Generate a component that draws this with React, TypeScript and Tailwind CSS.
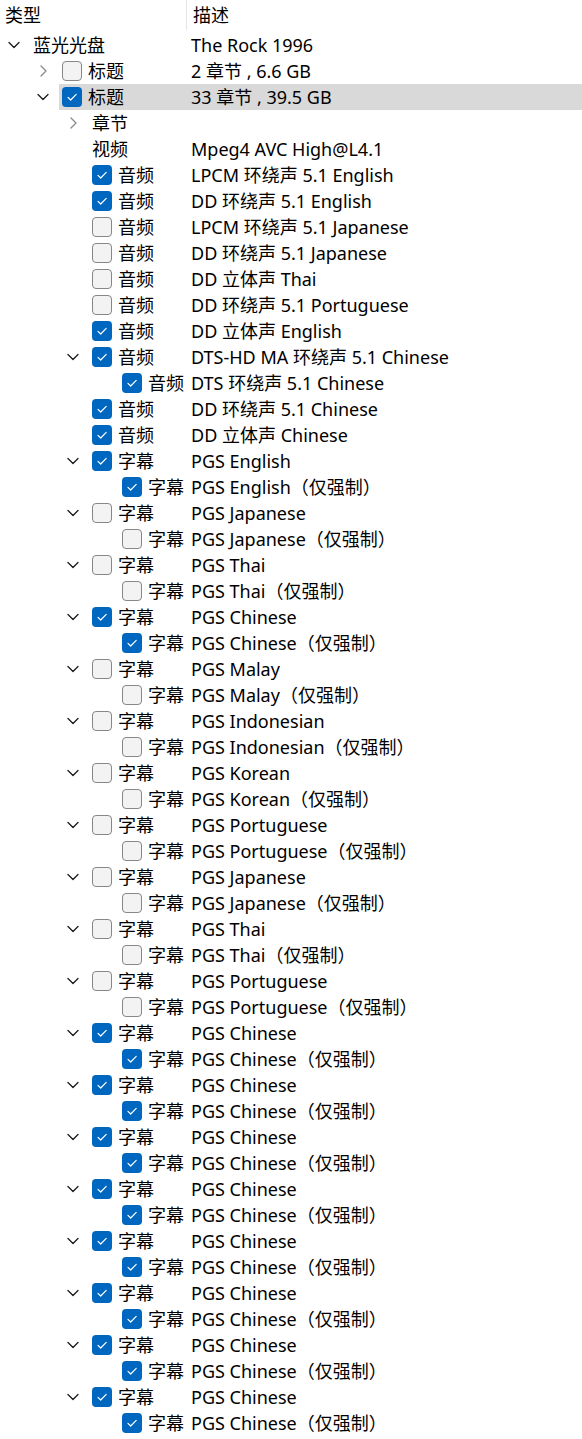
import React from "react";

type Row = {
  level: 0 | 1 | 2 | 3;
  exp?: "open" | "closed";
  cb?: "on" | "off";
  name: string;
  desc?: string;
  sel?: boolean;
};

const rows: Row[] = [
  { level: 0, exp: "open", name: "蓝光光盘", desc: "The Rock 1996" },
  { level: 1, exp: "closed", cb: "off", name: "标题", desc: "2 章节 , 6.6 GB" },
  { level: 1, exp: "open", cb: "on", name: "标题", desc: "33 章节 , 39.5 GB", sel: true },
  { level: 2, exp: "closed", name: "章节" },
  { level: 2, name: "视频", desc: "Mpeg4 AVC High@L4.1" },
  { level: 2, cb: "on", name: "音频", desc: "LPCM 环绕声 5.1 English" },
  { level: 2, cb: "on", name: "音频", desc: "DD 环绕声 5.1 English" },
  { level: 2, cb: "off", name: "音频", desc: "LPCM 环绕声 5.1 Japanese" },
  { level: 2, cb: "off", name: "音频", desc: "DD 环绕声 5.1 Japanese" },
  { level: 2, cb: "off", name: "音频", desc: "DD 立体声 Thai" },
  { level: 2, cb: "off", name: "音频", desc: "DD 环绕声 5.1 Portuguese" },
  { level: 2, cb: "on", name: "音频", desc: "DD 立体声 English" },
  { level: 2, exp: "open", cb: "on", name: "音频", desc: "DTS-HD MA 环绕声 5.1 Chinese" },
  { level: 3, cb: "on", name: "音频", desc: "DTS 环绕声 5.1 Chinese" },
  { level: 2, cb: "on", name: "音频", desc: "DD 环绕声 5.1 Chinese" },
  { level: 2, cb: "on", name: "音频", desc: "DD 立体声 Chinese" },
];

const subs: [string, boolean][] = [
  ["English", true],
  ["Japanese", false],
  ["Thai", false],
  ["Chinese", true],
  ["Malay", false],
  ["Indonesian", false],
  ["Korean", false],
  ["Portuguese", false],
  ["Japanese", false],
  ["Thai", false],
  ["Portuguese", false],
  ["Chinese", true],
  ["Chinese", true],
  ["Chinese", true],
  ["Chinese", true],
  ["Chinese", true],
  ["Chinese", true],
  ["Chinese", true],
  ["Chinese", true],
];

for (const [lang, on] of subs) {
  rows.push({ level: 2, exp: "open", cb: on ? "on" : "off", name: "字幕", desc: `PGS ${lang}` });
  rows.push({ level: 3, cb: on ? "on" : "off", name: "字幕", desc: `PGS ${lang}（仅强制）` });
}

const leftW: Record<number, string> = {
  0: "w-[30px]",
  1: "w-[59px]",
  2: "w-[89px]",
  3: "w-[119px]",
};
const padL: Record<number, string> = {
  0: "pl-0",
  1: "pl-[29px]",
  2: "pl-[59px]",
  3: "pl-[89px]",
};
const nameW: Record<number, string> = {
  0: "w-[161px]",
  1: "w-[132px]",
  2: "w-[102px]",
  3: "w-[72px]",
};

function Chevron({ exp }: { exp?: "open" | "closed" }) {
  if (exp === "open")
    return (
      <svg width="12" height="8" viewBox="0 0 12 8" fill="none">
        <path d="M1 1.5 L6 6.5 L11 1.5" stroke="#1b1b1b" strokeWidth="1.3" strokeLinecap="round" strokeLinejoin="round" />
      </svg>
    );
  if (exp === "closed")
    return (
      <svg width="8" height="12" viewBox="0 0 8 12" fill="none">
        <path d="M2 1 L7 6 L2 11" stroke="#8a8a8a" strokeWidth="1.3" strokeLinecap="round" strokeLinejoin="round" />
      </svg>
    );
  return null;
}

function Check({ on }: { on: boolean }) {
  if (on)
    return (
      <div className="w-[20px] h-[20px] rounded-[4px] bg-[#0067c0] flex items-center justify-center shrink-0">
        <svg width="20" height="20" viewBox="0 0 20 20" fill="none">
          <path d="M6 10.3 L8.7 13 L14.2 7.4" stroke="#ffffff" strokeWidth="1.2" strokeLinecap="round" strokeLinejoin="round" />
        </svg>
      </div>
    );
  return <div className="w-[20px] h-[20px] rounded-[4px] bg-[#f3f3f3] border border-[#878787] shrink-0" />;
}

function TreeRow({ r }: { r: Row }) {
  return (
    <div className="flex h-[26px] items-stretch">
      <div className={`${leftW[r.level]} ${padL[r.level]} shrink-0 flex items-center`}>
        <div className="w-[28px] flex items-center justify-center">
          <Chevron exp={r.exp} />
        </div>
      </div>
      <div className={`flex-1 flex items-center ${r.sel ? "bg-[#d9d9d9]" : ""}`}>
        <div className={`${nameW[r.level]} shrink-0 flex items-center pl-[3px]`}>
          {r.cb ? <Check on={r.cb === "on"} /> : null}
          <span className={r.cb ? "ml-[6px]" : ""}>{r.name}</span>
        </div>
        <span className="whitespace-nowrap">{r.desc}</span>
      </div>
    </div>
  );
}

export default function App() {
  return (
    <div
      className="w-[582px] h-[1439px] bg-white text-[18px] leading-[26px] text-black overflow-hidden"
      style={{ fontFamily: '"Noto Sans", "Noto Sans CJK SC", sans-serif' }}
    >
      <div className="flex h-[32px]">
        <div className="w-[186px] shrink-0 flex items-start pt-[2px] pl-[5px]">类型</div>
        <div className="w-px h-[30px] bg-[#e5e5e5] shrink-0" />
        <div className="flex-1 pl-[6px] pt-[2px]">描述</div>
      </div>
      {rows.map((r, i) => (
        <TreeRow key={i} r={r} />
      ))}
    </div>
  );
}
